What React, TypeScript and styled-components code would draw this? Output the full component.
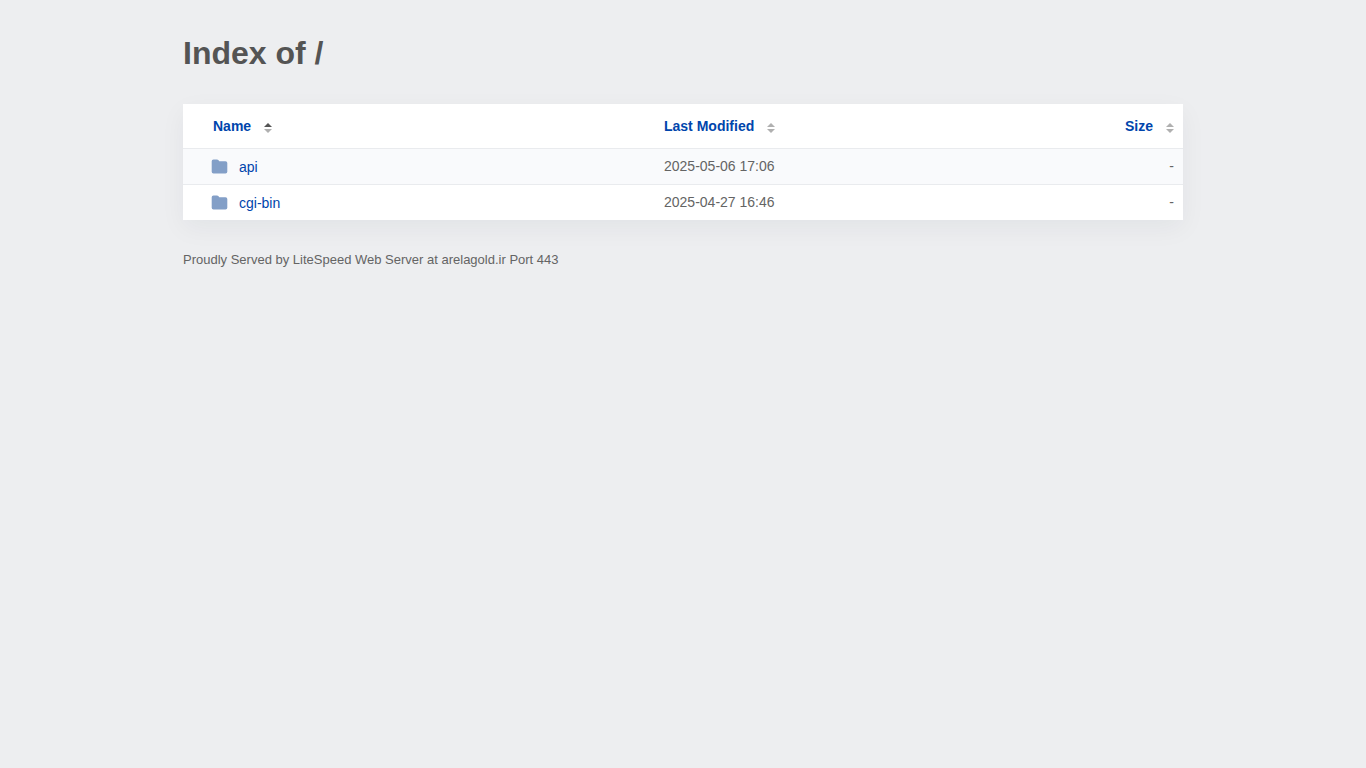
import React from "react";
import styled, { createGlobalStyle } from "styled-components";

const GlobalStyle = createGlobalStyle`
  *, *::before, *::after { box-sizing: border-box; }
  body {
    margin: 0;
    background: #edeef0;
    color: #545454;
    font-family: "Liberation Sans", Arial, sans-serif;
    font-size: 14px;
    line-height: 20px;
  }
`;

const Page = styled.main`
  max-width: 1064px;
  margin: 0 auto;
  padding: 32px;
`;

const Title = styled.h1`
  margin: 0 0 30px;
  font-size: 32px;
  line-height: 42px;
  font-weight: 700;
`;

const Listing = styled.table`
  width: 100%;
  table-layout: fixed;
  border-collapse: separate;
  border-spacing: 0;
  background: #fff;
  box-shadow: 0 8px 24px rgba(0, 37, 55, 0.05);
`;

type Align = "left" | "right";

const HeadCell = styled.th<{ $width: string; $align?: Align; $indent?: number }>`
  width: ${(p) => p.$width};
  height: 44px;
  padding: 0 9px 2px ${(p) => p.$indent ?? 11}px;
  text-align: ${(p) => p.$align ?? "left"};
`;

const SortLink = styled.a`
  display: inline-flex;
  align-items: center;
  gap: 13px;
  color: #0045ac;
  font-weight: 700;
  text-decoration: none;
  vertical-align: middle;
`;

const SortArrows = styled.svg`
  display: block;
  width: 8px;
  height: 10px;
  margin-top: 4px;
`;

const Row = styled.tr`
  &:nth-child(odd) { background: #f9fafc; }
`;

const Cell = styled.td<{ $align?: Align; $indent?: number }>`
  height: 36px;
  padding: 0 9px 2px ${(p) => p.$indent ?? 11}px;
  border-top: 1px solid #e9ebee;
  color: #646464;
  text-align: ${(p) => p.$align ?? "left"};
`;

const EntryLink = styled.a`
  display: flex;
  align-items: center;
  gap: 11px;
  padding-top: 2px;
  color: #0045ac;
  text-decoration: none;
`;

const Folder = styled.svg`
  display: block;
  width: 17px;
  height: 16px;
`;

const Footer = styled.footer`
  margin-top: 30px;
  color: #646464;
  font-size: 13px;
`;

const entries = [
  { name: "api", modified: "2025-05-06 17:06", size: "-" },
  { name: "cgi-bin", modified: "2025-04-27 16:46", size: "-" },
];

function SortHeading({ label, ascending = false }: { label: string; ascending?: boolean }) {
  return (
    <SortLink href="#">
      {label}
      <SortArrows viewBox="0 0 8 10" aria-hidden="true">
        <path d="M4 0 8 4H0Z" fill={ascending ? "#545454" : "#b0b0b0"} />
        <path d="M0 6h8l-4 4Z" fill="#b0b0b0" />
      </SortArrows>
    </SortLink>
  );
}

export default function App() {
  return (
    <>
      <GlobalStyle />
      <Page>
        <Title>Index of /</Title>
        <Listing>
          <thead>
            <tr>
              <HeadCell $width="47%" $indent={30} aria-sort="ascending">
                <SortHeading label="Name" ascending />
              </HeadCell>
              <HeadCell $width="33%">
                <SortHeading label="Last Modified" />
              </HeadCell>
              <HeadCell $width="20%" $align="right">
                <SortHeading label="Size" />
              </HeadCell>
            </tr>
          </thead>
          <tbody>
            {entries.map((entry) => (
              <Row key={entry.name}>
                <Cell $indent={28}>
                  <EntryLink href={`#${entry.name}`}>
                    <Folder viewBox="0 0 17 16" aria-hidden="true">
                      <path
                        d="M2.5 .5H6q.8 0 1.300.6L8.300 2.200H14.500Q16.300 2.200 16.300 4V12.700Q16.300 14.500 14.500 14.500H2.500Q.7 14.500 .7 12.700V2.300Q.7 .5 2.500 .5Z"
                        fill="#839fc7"
                      />
                    </Folder>
                    {entry.name}
                  </EntryLink>
                </Cell>
                <Cell>{entry.modified}</Cell>
                <Cell $align="right">{entry.size}</Cell>
              </Row>
            ))}
          </tbody>
        </Listing>
        <Footer>Proudly Served by LiteSpeed Web Server at arelagold.ir Port 443</Footer>
      </Page>
    </>
  );
}
